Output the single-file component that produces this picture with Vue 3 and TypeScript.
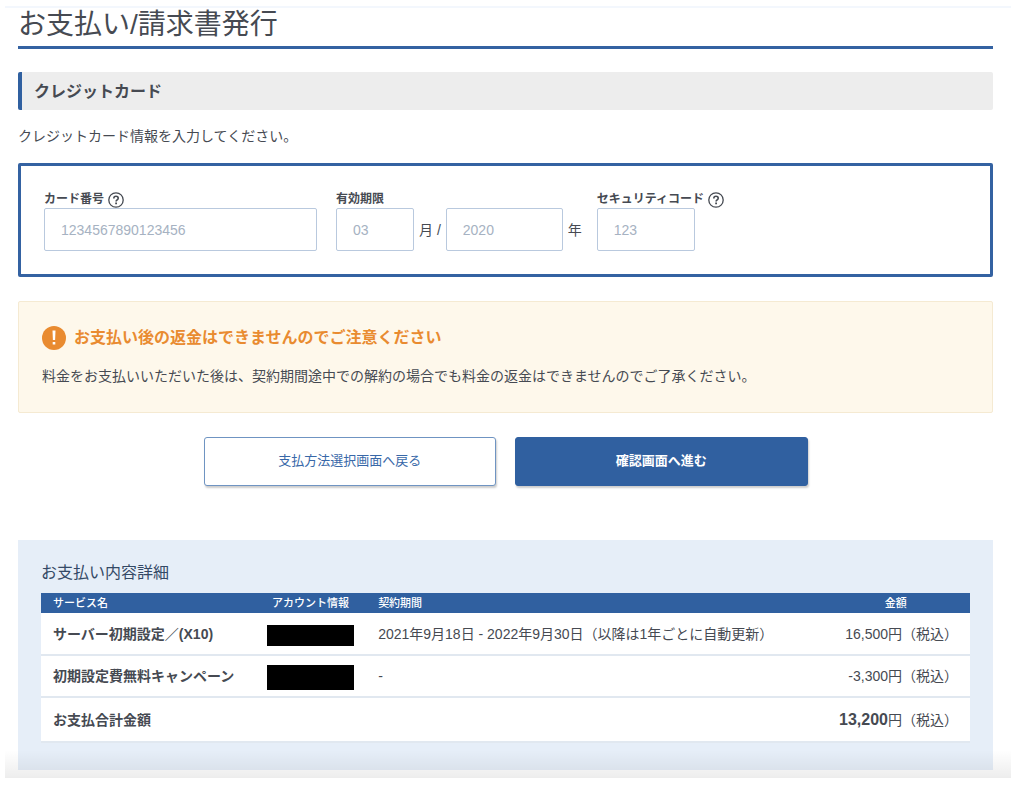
<script setup lang="ts">
import { ref } from 'vue'

interface Item {
  name: string
  period: string
  amount: string
  tall: boolean
}

const cardNumber = ref('')
const month = ref('')
const year = ref('')
const code = ref('')

const items: Item[] = [
  { name: 'サーバー初期設定／(X10)', period: '2021年9月18日 - 2022年9月30日（以降は1年ごとに自動更新）', amount: '16,500', tall: false },
  { name: '初期設定費無料キャンペーン', period: '-', amount: '-3,300', tall: true },
]
</script>

<template>
  <main class="page">
    <h1>お支払い/請求書発行</h1>
    <h2>クレジットカード</h2>
    <p class="lead">クレジットカード情報を入力してください。</p>

    <form id="card-form" class="card" @submit.prevent>
      <div class="field field-number">
        <div class="caption">
          <label for="card-number">カード番号</label>
          <button type="button" class="help" aria-label="カード番号について">
            <svg viewBox="0 0 16 16" width="16" height="16" fill="none" stroke="currentColor">
              <circle cx="8" cy="8" r="7.2" stroke-width="1.3" />
              <path d="M5.8 6.4C5.8 5 6.7 4.2 8 4.2s2.2.8 2.2 2c0 1.6-2.1 1.7-2.1 3.3" stroke-width="1.6" />
              <path d="M8.1 10.5v1.7" stroke-width="1.8" />
            </svg>
          </button>
        </div>
        <input id="card-number" v-model="cardNumber" type="text" placeholder="1234567890123456" />
      </div>

      <div class="field">
        <div class="caption"><label for="month">有効期限</label></div>
        <div class="expiry">
          <input id="month" v-model="month" class="w-month" type="text" placeholder="03" />
          <span>月 /</span>
          <input v-model="year" class="w-year" type="text" placeholder="2020" aria-label="有効期限（年）" />
          <span>年</span>
        </div>
      </div>

      <div class="field">
        <div class="caption">
          <label for="code">セキュリティコード</label>
          <button type="button" class="help" aria-label="セキュリティコードについて">
            <svg viewBox="0 0 16 16" width="16" height="16" fill="none" stroke="currentColor">
              <circle cx="8" cy="8" r="7.2" stroke-width="1.3" />
              <path d="M5.8 6.4C5.8 5 6.7 4.2 8 4.2s2.2.8 2.2 2c0 1.6-2.1 1.7-2.1 3.3" stroke-width="1.6" />
              <path d="M8.1 10.5v1.7" stroke-width="1.8" />
            </svg>
          </button>
        </div>
        <input id="code" v-model="code" class="w-code" type="text" placeholder="123" />
      </div>
    </form>

    <section class="notice">
      <h3>
        <svg viewBox="0 0 24 24" width="24" height="24" aria-hidden="true">
          <circle cx="12" cy="12" r="12" fill="#e98b30" />
          <path d="M10.5 4.5h3l-.4 9.6h-2.2zM10.7 16h2.6v2.6h-2.6z" fill="#fff" />
        </svg>
        お支払い後の返金はできませんのでご注意ください
      </h3>
      <p>料金をお支払いいただいた後は、契約期間途中での解約の場合でも料金の返金はできませんのでご了承ください。</p>
    </section>

    <div class="actions">
      <button type="button" class="btn back">支払方法選択画面へ戻る</button>
      <button type="submit" form="card-form" class="btn next">確認画面へ進む</button>
    </div>

    <section class="summary">
      <h3 id="summary-title">お支払い内容詳細</h3>
      <table aria-labelledby="summary-title">
        <thead>
          <tr>
            <th class="c-name" scope="col">サービス名</th>
            <th class="c-account" scope="col">アカウント情報</th>
            <th scope="col">契約期間</th>
            <th class="c-amount" scope="col">金額</th>
          </tr>
        </thead>
        <tbody>
          <tr v-for="item in items" :key="item.name">
            <th scope="row">{{ item.name }}</th>
            <td class="account"><span class="mask" :class="{ tall: item.tall }"></span></td>
            <td>{{ item.period }}</td>
            <td class="amount">{{ item.amount }}円（税込）</td>
          </tr>
        </tbody>
        <tfoot>
          <tr>
            <th scope="row" colspan="3">お支払合計金額</th>
            <td class="amount"><strong>13,200</strong>円（税込）</td>
          </tr>
        </tfoot>
      </table>
    </section>
  </main>
</template>

<style>
body {
  margin: 0;
  background: #fff;
}
</style>

<style scoped>
.page,
.page * {
  box-sizing: border-box;
}

.page {
  position: relative;
  margin: 6px 13px 0 5px;
  padding: 0 18px 8px 13px;
  border-top: 2px solid #f3f7fd;
  color: #464a52;
  font: 14px/20px "Liberation Sans", "Noto Sans CJK JP", sans-serif;
}

.page::after {
  content: "";
  position: absolute;
  inset: auto 0 0;
  height: 28px;
  background: linear-gradient(rgba(0, 0, 0, 0), rgba(0, 0, 0, 0.07));
  pointer-events: none;
}

h1,
h2,
h3,
p {
  margin: 0;
}

h1 {
  padding-bottom: 5px;
  border-bottom: 3px solid #3462a2;
  font-size: 28px;
  font-weight: 400;
  line-height: 33px;
}

h2 {
  margin-top: 23px;
  padding: 10px 12px 8px;
  border-left: 4px solid #3060a0;
  border-radius: 2px;
  background: #ededed;
  font-size: 16px;
  line-height: 20px;
}

.lead {
  margin: 16px 0 17px;
}

.card {
  display: flex;
  gap: 15px;
  padding: 24px 23px 23px;
  border: 3px solid #3462a2;
  border-radius: 2px;
}

.field-number {
  width: 273px;
  margin-right: 4px;
}

.caption {
  display: flex;
  align-items: center;
  gap: 4px;
  height: 18px;
  font-size: 12px;
  font-weight: 700;
  line-height: 18px;
}

.help {
  display: flex;
  padding: 2px 0 0;
  border: 0;
  background: none;
  color: inherit;
  cursor: pointer;
}

input {
  display: block;
  width: 100%;
  height: 43px;
  padding: 0 16px;
  border: 1px solid #b9c9de;
  border-radius: 2px;
  background: #fff;
  color: inherit;
  font: inherit;
}

input::placeholder {
  color: #a6b2c2;
  opacity: 1;
}

.expiry {
  display: flex;
  align-items: center;
  gap: 5px;
}

.expiry span {
  white-space: nowrap;
}

.w-month {
  width: 78px;
}

.w-year {
  width: 117px;
}

.w-code {
  width: 98px;
}

.notice {
  margin-top: 24px;
  padding: 24px 23px 26px;
  border: 1px solid #f5ead2;
  border-radius: 2px;
  background: #fef8eb;
}

.notice h3 {
  display: flex;
  align-items: center;
  gap: 8px;
  margin-bottom: 16px;
  color: #e98b30;
  font-size: 16px;
  line-height: 20px;
}

.actions {
  display: flex;
  justify-content: center;
  gap: 19px;
  margin: 24px 0 54px;
}

.btn {
  width: 30%;
  height: 49px;
  padding: 0 6px 2px;
  border: 1px solid #6f94c2;
  border-radius: 3px;
  box-shadow: 1px 2px 2px rgba(0, 0, 0, 0.2);
  font: inherit;
  font-size: 13px;
  cursor: pointer;
}

.back {
  background: #fff;
  color: #3868a8;
}

.next {
  border-color: #3060a0;
  background: #3060a0;
  color: #fff;
  font-weight: 700;
}

.summary {
  padding: 23px 23px 27px;
  background: #e6eef8;
}

.summary h3 {
  margin-bottom: 10px;
  color: #344966;
  font-size: 16px;
  font-weight: 400;
  line-height: 20px;
}

table {
  width: 100%;
  border-collapse: collapse;
  table-layout: fixed;
  background: #fff;
}

th,
td {
  height: 42px;
  padding: 0 12px;
  border-bottom: 2px solid #e1e8f0;
  text-align: left;
  white-space: nowrap;
}

tfoot th,
tfoot td {
  height: 45px;
}

thead th {
  height: 20px;
  border: 0;
  background: #3060a0;
  color: #fff;
  font-size: 11px;
  font-weight: 500;
  line-height: 20px;
}

.c-name {
  width: 23%;
}

.c-account {
  width: 12%;
  text-align: center;
}

.c-amount {
  width: 16%;
  text-align: center;
}

.account {
  padding-top: 3px;
}

.mask {
  display: block;
  height: 21px;
  background: #000;
}

.mask.tall {
  height: 25px;
}

.amount {
  text-align: right;
}

.amount strong {
  font-size: 16px;
}
</style>
